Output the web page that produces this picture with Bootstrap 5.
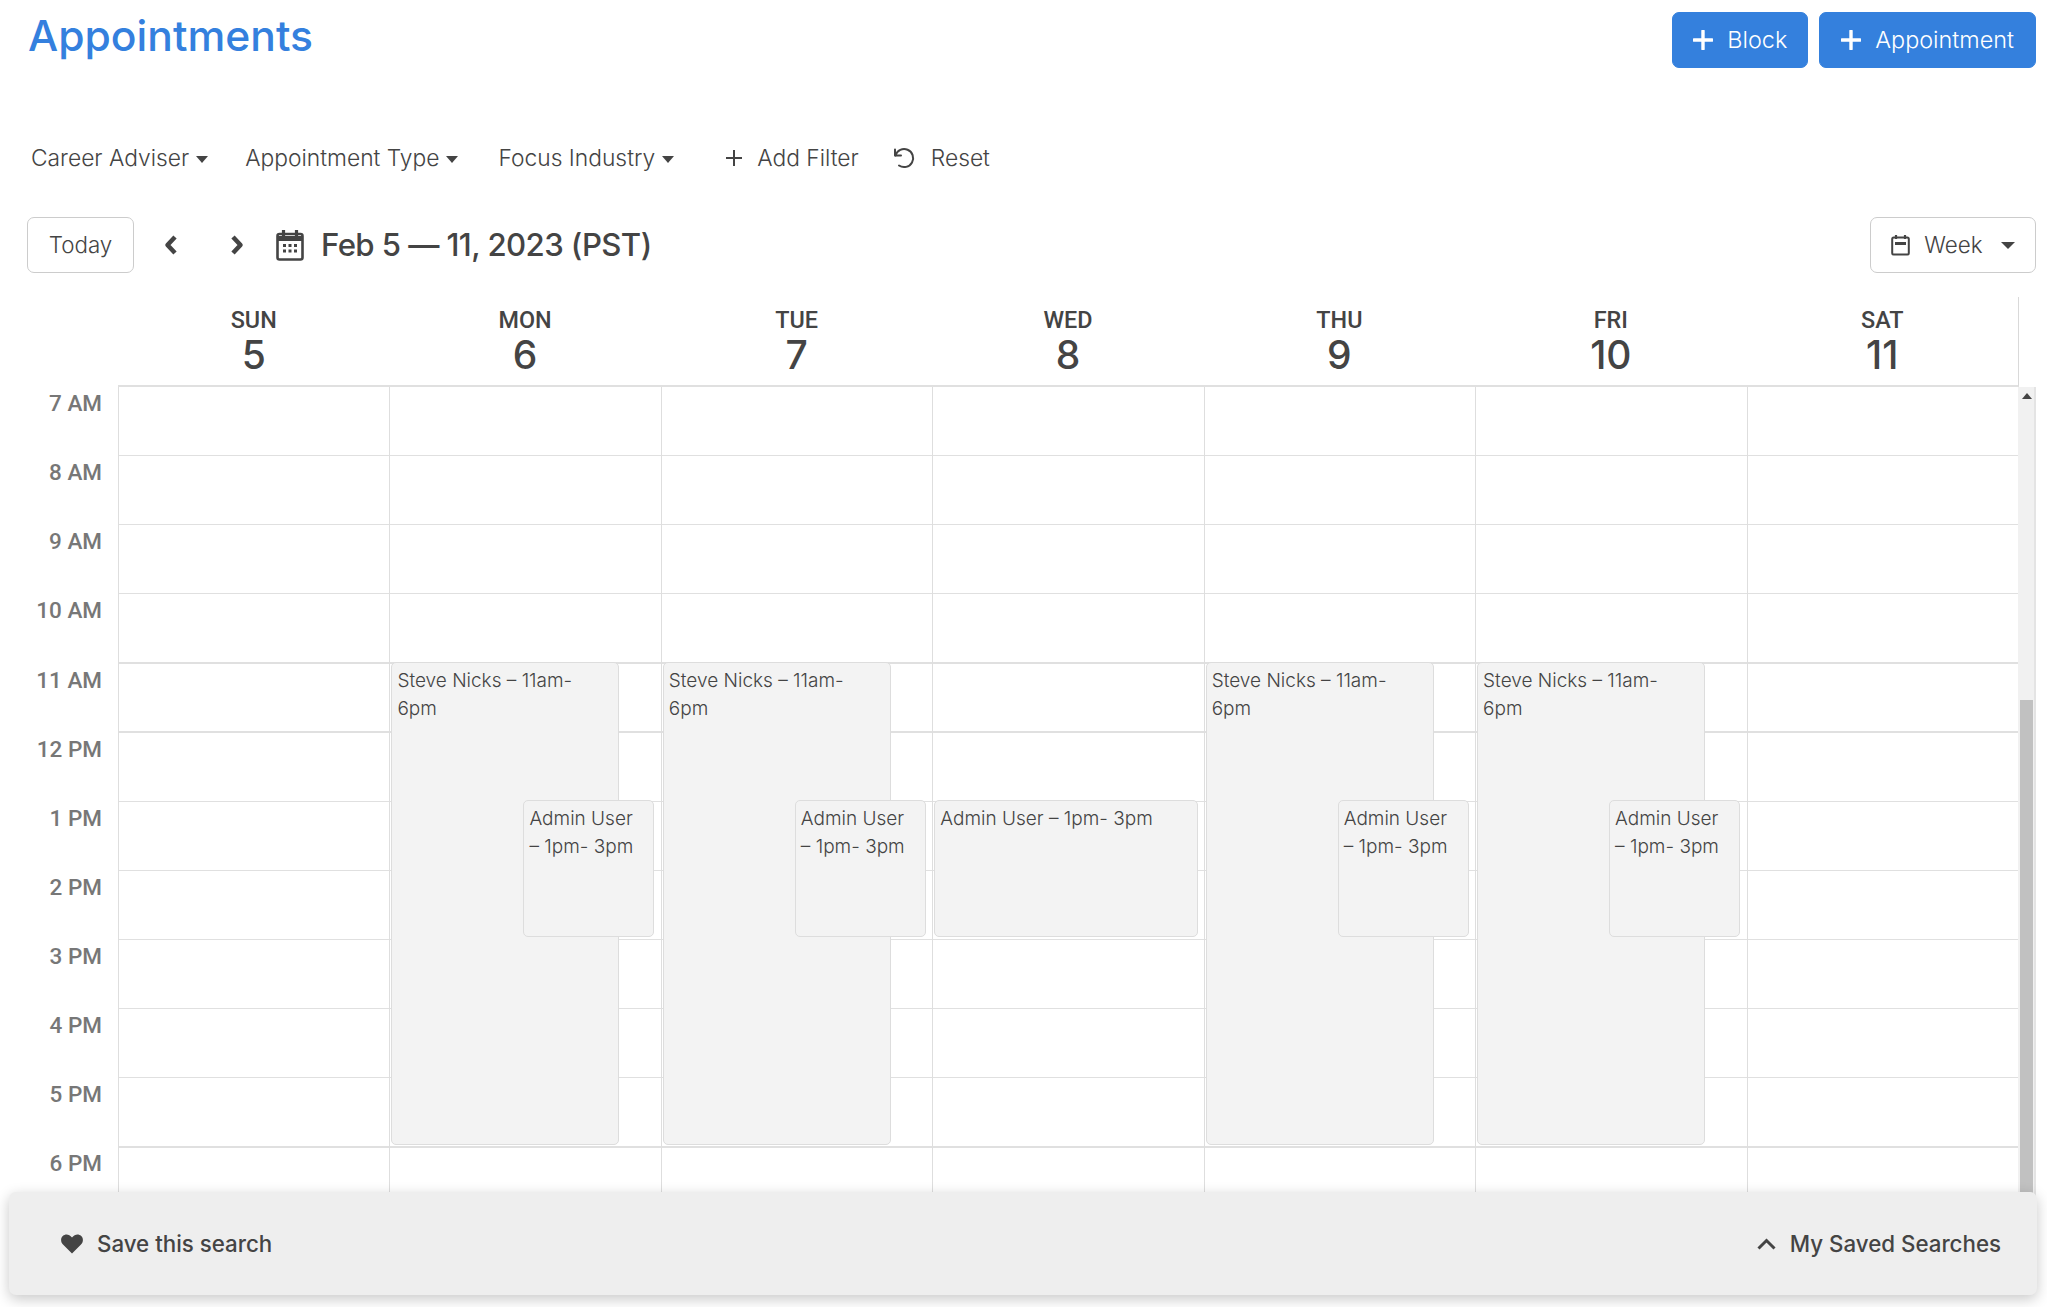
<!DOCTYPE html>
<html lang="en">
<head>
<meta charset="utf-8">
<title>Appointments</title>
<link href="https://cdn.jsdelivr.net/npm/bootstrap@5.3.0/dist/css/bootstrap.min.css" rel="stylesheet">
<style>
html,body{height:1307px;overflow:hidden;background:#fff}
body{font-family:Inter,"Liberation Sans",sans-serif;color:#444;font-weight:300}
.appt-page{position:relative;height:1307px;padding:12px 11px 0 27px}
.appt-title{font-family:Inter,sans-serif;font-weight:500;font-size:42.6px;line-height:48px;color:#3480de;margin:0 0 0 1px}
.appt-top{height:56px}
.cta{background:#3480dd;border-color:#3480dd;color:#fff;font-size:23.4px;height:56px;border-radius:7px;padding:0 21px;font-weight:300;display:flex;align-items:center;gap:14px}
.cta svg{width:20px;height:20px}
.cta-short{padding:0 20px}
.cta-gap{gap:11px}
.filters{height:64px;margin-top:58px;padding-left:4px;font-size:22.8px}
.filter-btn{padding:0;border:0;font-size:22.8px;font-weight:300;color:#444;line-height:30px}
.filter-btn.dropdown-toggle::after{margin-left:7px;border-top-width:7px;border-left-width:6px;border-right-width:6px;vertical-align:3px}
.outline-btn{height:56px;border:1px solid #ccc;border-radius:7px;background:#fff;font-size:22.4px;font-weight:300;color:#444;padding:0;display:flex;align-items:center;justify-content:center}
.today-btn{width:107px}
.week-btn{width:166px;gap:14px}
.week-btn.dropdown-toggle::after{margin-left:4px;border-top-width:7px;border-left-width:7px;border-right-width:7px}
.range-title{font-family:Inter,sans-serif;font-weight:500;font-size:31.2px;letter-spacing:-.6px;margin:0;color:#444;position:relative;top:1px}
.tools{height:56px;margin-top:27px}
.cal-head{height:90px;margin-top:24px;padding-left:91px}
.cal-head-days{width:1901px;border-right:1px solid #d9d9d9;border-bottom:2px solid #e0e0e0;font-family:Roboto,sans-serif;font-weight:500}
.head-cell{flex:1 1 0;text-align:center;padding-top:10px}
.head-name{font-size:23.4px;line-height:27px;color:#444}
.head-num{font-family:Inter,sans-serif;font-size:39px;line-height:41px;color:#444}
.cal-body{height:830px}
.time-col{width:91px;flex:none;font-family:Roboto,sans-serif;font-weight:500;color:#777;font-size:22.5px;text-align:right;padding-right:16px}
.time-cell{height:69.14px;line-height:32px}
.day-wrap{width:1900px;flex:none}
.day-col{flex:1 1 0;position:relative;border-left:1px solid #dedede;background:repeating-linear-gradient(to bottom,#fff 0,#fff 67.9px,#e0e0e0 67.9px,#e0e0e0 69.14px)}
.evt{position:absolute;background:#f3f3f3;border:1px solid #ddd;border-radius:5px;font-size:19px;line-height:27.5px;padding:4px 5px;color:#444;overflow:hidden}
.evt-long{left:1px;width:228px;top:275px;height:483px}
.evt-short{left:133px;width:131px;top:413px;height:137px}
.evt-wide{left:1px;width:264px;top:413px;height:137px}
.rail{width:18px;flex:none;background:#f1f1f1;border-right:2px solid #e4e4e4;position:relative}
.rail-arrow{position:absolute;left:4px;top:6px;border:5px solid transparent;border-top:0;border-bottom:6px solid #444}
.rail-thumb{position:absolute;left:2px;width:13px;top:313px;bottom:0;background:#c1c1c1}
.save-bar{position:absolute;left:9px;top:1192px;width:2028px;height:103px;background:#eee;border-radius:7px;box-shadow:0 4px 14px rgba(0,0,0,.22);padding:0 36px 0 52px;font-size:22.3px;font-weight:500}
.ms-filter-a{margin-left:37px}
.ms-filter-b{margin-left:40px}
.add-filter{margin-left:51px;gap:14px}
.reset-filter{margin-left:33px;gap:15px}
.nav-prev{margin-left:29px}
.nav-next{margin-left:50px}
.cal-icon{margin-left:31px;margin-right:17px}
.gap-save{gap:14px}
</style>
</head>
<body>
<div class="appt-page">
  <div class="appt-top d-flex justify-content-between">
    <h1 class="appt-title">Appointments</h1>
    <div class="d-flex cta-gap">
      <button class="btn cta cta-short" type="button"><svg viewBox="0 0 20 20"><path d="M10 1v18M1 10h18" stroke="#fff" stroke-width="3.4" stroke-linecap="round" fill="none"/></svg>Block</button>
      <button class="btn cta" type="button"><svg viewBox="0 0 20 20"><path d="M10 1v18M1 10h18" stroke="#fff" stroke-width="3.4" stroke-linecap="round" fill="none"/></svg>Appointment</button>
    </div>
  </div>

  <div class="filters d-flex align-items-center">
    <button class="btn filter-btn dropdown-toggle" type="button">Career Adviser</button>
    <button class="btn filter-btn dropdown-toggle ms-filter-a" type="button">Appointment Type</button>
    <button class="btn filter-btn dropdown-toggle ms-filter-b" type="button">Focus Industry</button>
    <span class="d-flex align-items-center add-filter"><svg width="18" height="18" viewBox="0 0 18 18"><path d="M9 1v16M1 9h16" stroke="#444" stroke-width="2" fill="none"/></svg>Add Filter</span>
    <span class="d-flex align-items-center reset-filter"><svg width="24" height="24" viewBox="0 0 24 24" fill="none" stroke="#444" stroke-width="2" stroke-linecap="round" stroke-linejoin="round"><path d="M3 3.5v6h6"/><path d="M3.5 9.5A9 9 0 1 1 7 19.5"/></svg>Reset</span>
  </div>

  <div class="tools d-flex align-items-center justify-content-between">
    <div class="d-flex align-items-center">
      <button class="outline-btn today-btn" type="button">Today</button>
      <svg class="nav-prev" width="16" height="22" viewBox="0 0 16 22"><path d="M12 3 4.500 11l7.500 8" fill="none" stroke="#444" stroke-width="4.500" stroke-linejoin="round"/></svg>
      <svg class="nav-next" width="16" height="22" viewBox="0 0 16 22"><path d="m4 3 7.500 8L4 19" fill="none" stroke="#444" stroke-width="4.500" stroke-linejoin="round"/></svg>
      <svg class="cal-icon" width="28" height="32" viewBox="0 0 28 32"><rect x="1.500" y="5" width="25" height="25.500" rx="2" fill="none" stroke="#444" stroke-width="2.600"/><path d="M1.500 7h25v5h-25z" fill="#444"/><path d="M7.500 1v6M20.500 1v6" stroke="#444" stroke-width="3.200"/><path d="M7 15h3v3H7zM12.500 15h3v3h-3zM18 15h3v3h-3zM7 20.500h3v3H7zM12.500 20.500h3v3h-3zM18 20.500h3v3h-3z" fill="#444"/></svg>
      <h2 class="range-title">Feb 5 — 11, 2023 (PST)</h2>
    </div>
    <button class="outline-btn week-btn dropdown-toggle" type="button"><svg width="19" height="22" viewBox="0 0 19 22"><rect x="1.200" y="3.500" width="16.600" height="17" rx="1.500" fill="none" stroke="#444" stroke-width="2"/><path d="M4 8h11v3H4z" fill="#444"/><path d="M5 1v4M14 1v4" stroke="#444" stroke-width="2.200"/></svg>Week</button>
  </div>

  <div class="cal-head d-flex">
    <div class="cal-head-days d-flex">
      <div class="head-cell"><div class="head-name">SUN</div><div class="head-num">5</div></div>
      <div class="head-cell"><div class="head-name">MON</div><div class="head-num">6</div></div>
      <div class="head-cell"><div class="head-name">TUE</div><div class="head-num">7</div></div>
      <div class="head-cell"><div class="head-name">WED</div><div class="head-num">8</div></div>
      <div class="head-cell"><div class="head-name">THU</div><div class="head-num">9</div></div>
      <div class="head-cell"><div class="head-name">FRI</div><div class="head-num">10</div></div>
      <div class="head-cell"><div class="head-name">SAT</div><div class="head-num">11</div></div>
    </div>
  </div>

  <div class="cal-body d-flex">
    <div class="time-col">
      <div class="time-cell">7 AM</div><div class="time-cell">8 AM</div><div class="time-cell">9 AM</div><div class="time-cell">10 AM</div>
      <div class="time-cell">11 AM</div><div class="time-cell">12 PM</div><div class="time-cell">1 PM</div><div class="time-cell">2 PM</div>
      <div class="time-cell">3 PM</div><div class="time-cell">4 PM</div><div class="time-cell">5 PM</div><div class="time-cell">6 PM</div>
    </div>
    <div class="day-wrap d-flex">
      <div class="day-col"></div>
      <div class="day-col">
        <div class="evt evt-long">Steve Nicks – 11am-<br>6pm</div>
        <div class="evt evt-short">Admin User<br>– 1pm- 3pm</div>
      </div>
      <div class="day-col">
        <div class="evt evt-long">Steve Nicks – 11am-<br>6pm</div>
        <div class="evt evt-short">Admin User<br>– 1pm- 3pm</div>
      </div>
      <div class="day-col">
        <div class="evt evt-wide">Admin User – 1pm- 3pm</div>
      </div>
      <div class="day-col">
        <div class="evt evt-long">Steve Nicks – 11am-<br>6pm</div>
        <div class="evt evt-short">Admin User<br>– 1pm- 3pm</div>
      </div>
      <div class="day-col">
        <div class="evt evt-long">Steve Nicks – 11am-<br>6pm</div>
        <div class="evt evt-short">Admin User<br>– 1pm- 3pm</div>
      </div>
      <div class="day-col"></div>
    </div>
    <div class="rail"><div class="rail-arrow"></div><div class="rail-thumb"></div></div>
  </div>

  <div class="save-bar d-flex align-items-center justify-content-between">
    <div class="d-flex align-items-center gap-save"><svg width="22" height="20" viewBox="0 0 22 20"><path d="M11 19.500 2 10.500C-.5 8-.5 4 1.800 2 4.300-.2 8-.2 11 3.500 14-.2 17.700-.2 20.200 2c2.300 2 2.300 6-.2 8.500z" fill="#444"/></svg>Save this search</div>
    <div class="d-flex align-items-center gap-save"><svg width="19" height="12" viewBox="0 0 19 12"><path d="m1.500 10.500 8-8 8 8" fill="none" stroke="#444" stroke-width="3"/></svg>My Saved Searches</div>
  </div>
</div>
</body>
</html>
